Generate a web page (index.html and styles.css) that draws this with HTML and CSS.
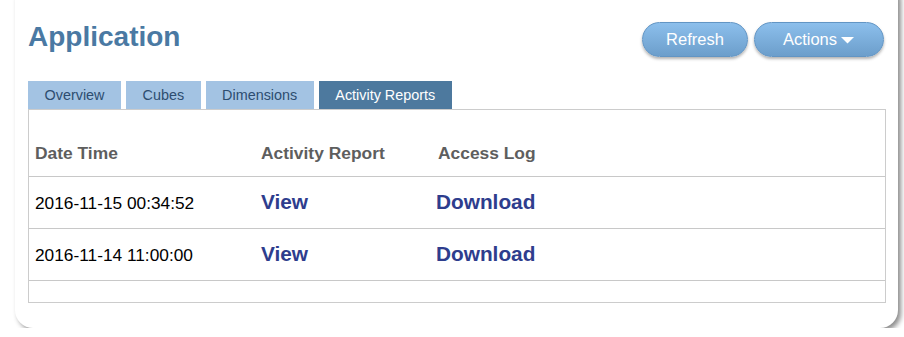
FILE: index.html
```html
<!DOCTYPE html>
<html lang="en">

<head>
    <meta charset="UTF-8">
    <meta name="viewport" content="width=device-width, initial-scale=1.0">
    <title>Application</title>
    <link rel="stylesheet" href="styles.css">
</head>

<body>
    <div class="card">
        <div class="header">
            <h1 class="title">Application</h1>
            <div class="buttons">
                <button class="btn">Refresh</button>
                <button class="btn btn-actions">Actions
                    <svg class="caret" width="13" height="7" viewBox="0 0 13 7">
                        <polygon points="0,0 13,0 6.5,6.5" fill="#fff" />
                    </svg>
                </button>
            </div>
        </div>
        <ul class="tabs">
            <li class="tab">Overview</li>
            <li class="tab">Cubes</li>
            <li class="tab">Dimensions</li>
            <li class="tab active">Activity Reports</li>
        </ul>
        <div class="panel">
            <table class="reports">
                <thead>
                    <tr>
                        <th class="col-date">Date Time</th>
                        <th class="col-report">Activity Report</th>
                        <th>Access Log</th>
                    </tr>
                </thead>
                <tbody>
                    <tr>
                        <td>2016-11-15 00:34:52</td>
                        <td><a href="#" class="link">View</a></td>
                        <td><a href="#" class="link link-log">Download</a></td>
                    </tr>
                    <tr>
                        <td>2016-11-14 11:00:00</td>
                        <td><a href="#" class="link">View</a></td>
                        <td><a href="#" class="link link-log">Download</a></td>
                    </tr>
                </tbody>
            </table>
        </div>
    </div>
</body>

</html>
```

FILE: styles.css
```css
body {
    margin: 0;
    background: #fff;
    font-family: "Liberation Sans", Arial, sans-serif;
    overflow: hidden;
}

.card {
    margin: -20px 6px 0 15px;
    padding: 41px 12px 25px 13px;
    background: #fff;
    border-radius: 18px;
    box-shadow: 3px 3px 5px rgba(0, 0, 0, 0.45);
}

.header {
    display: flex;
    justify-content: space-between;
    align-items: flex-start;
    margin-bottom: 24px;
}

.title {
    margin: 0;
    font-size: 28px;
    line-height: 32px;
    font-weight: bold;
    color: #4a79a3;
}

.buttons {
    display: flex;
    gap: 6px;
    margin-top: 1px;
    margin-right: 2px;
}

.btn {
    height: 35px;
    padding: 0 23px;
    border: 1px solid #6295c4;
    border-radius: 18px;
    background: linear-gradient(#8cbfec, #6c9ecb);
    box-shadow: 0 2px 3px rgba(0, 0, 0, 0.3);
    color: #fff;
    font-family: "Liberation Sans", Arial, sans-serif;
    font-size: 16.5px;
    cursor: pointer;
}

.btn-actions {
    display: flex;
    align-items: center;
    gap: 4px;
    padding: 0 29px 0 28px;
}

.caret {
    display: block;
    margin-top: 2px;
}

.tabs {
    display: flex;
    gap: 5px;
    margin: 0;
    padding: 0;
    list-style: none;
}

.tab {
    height: 28px;
    padding: 0 16.5px;
    line-height: 28px;
    font-size: 14.4px;
    background: #a3c3e3;
    color: #2d4d70;
}

.tab.active {
    background: #4d799e;
    color: #fff;
}

.panel {
    padding: 19px 0 21px;
    border: 1px solid #cccccc;
}

.reports {
    width: 100%;
    border-collapse: separate;
    border-spacing: 0;
}

.reports th,
.reports td {
    padding: 15px 6px;
    line-height: 20px;
    text-align: left;
    border-bottom: 1px solid #c8c8c8;
}

.reports th {
    padding-top: 14px;
    padding-bottom: 13px;
    font-size: 17.4px;
    color: #5e5e5e;
}

.reports td {
    font-size: 17.3px;
    color: #000;
}

.col-date {
    width: 214px;
}

.col-report {
    width: 165px;
}

.link {
    font-size: 20.8px;
    font-weight: bold;
    color: #2e3d8d;
    text-decoration: none;
}

.link-log {
    margin-left: -2px;
}
```
